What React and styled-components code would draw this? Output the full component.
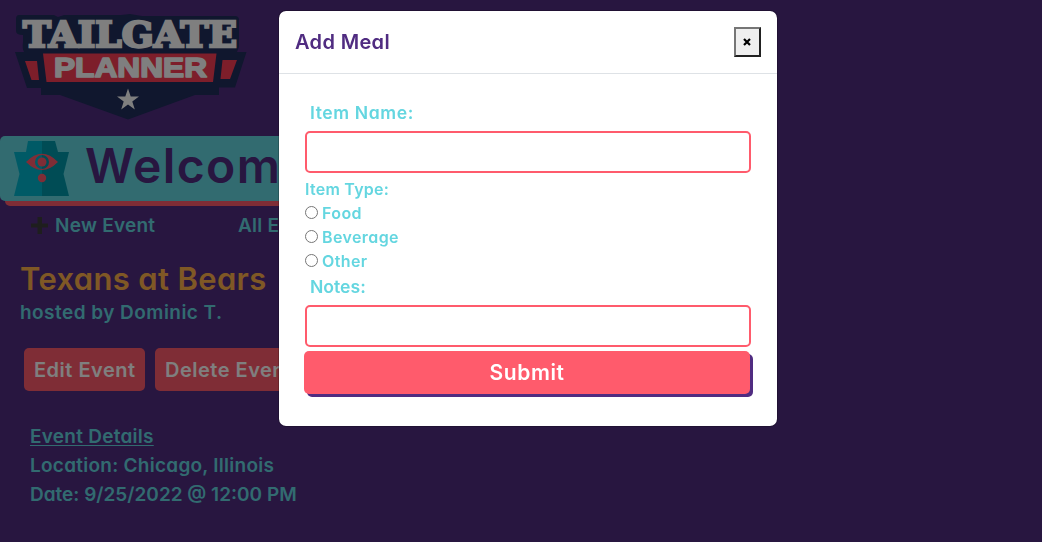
import React from "react";
import styled, { createGlobalStyle } from "styled-components";

const GlobalStyle = createGlobalStyle`
  *, *::before, *::after { box-sizing: border-box; }
  html, body, #root { height: 100%; }
  body {
    margin: 0;
    overflow: hidden;
    background: #502c81;
    color: #64d6e0;
    font-family: Inter, "Open Sans", sans-serif;
    font-feature-settings: "cv11" 1;
    font-weight: 560;
  }
  h1, h2, p { margin: 0; font-weight: 560; }
`;

const Text = styled.span`
  display: inline-block;
  vertical-align: top;
  white-space: nowrap;
  font-size: ${(p) => p.$size || 19}px;
  letter-spacing: ${(p) => p.$track ?? 0.26}px;
`;
const Page = styled.div`
  display: flex;
  flex-direction: column;
  align-items: flex-start;
`;
const Logo = styled.svg`
  display: block;
  width: 260px;
  height: 136px;
`;
const Banner = styled.header`
  display: flex;
  align-items: center;
  width: 500px;
  height: 65px;
  padding-left: 14px;
  gap: 16px;
  border-radius: 5px;
  background: #64d6e0;
  box-shadow: 5px 5px 0 #ff5b6c;
`;
const Mark = styled.svg`
  flex: none;
  width: 55px;
  height: 55px;
`;
const Greeting = styled.h1`
  color: #502c81;
  line-height: 53px;
  height: 60px;
`;
const Nav = styled.nav`
  display: flex;
  align-items: center;
  height: 48px;
  padding-left: 31px;
`;
const NavItem = styled.a`
  display: flex;
  align-items: center;
  gap: 7px;
  width: ${(p) => p.$width}px;
`;
const EventHead = styled.section`
  padding: 10px 0 0 20px;
`;
const EventTitle = styled.h2`
  color: #ffb04a;
  line-height: 40px;
`;
const Host = styled.p`
  line-height: 28px;
`;
const Actions = styled.div`
  display: flex;
  gap: 10px;
  padding: 21px 0 0 24px;
`;
const Action = styled.button`
  height: 43px;
  width: ${(p) => p.$width}px;
  padding: 0 0 0 10px;
  border: 0;
  border-radius: 5px;
  background: #ff5b6c;
  color: #fff;
  font: inherit;
  text-align: left;
`;
const Details = styled.section`
  padding: 31px 0 0 30px;
  line-height: 29px;
`;
const Underlined = styled.p`
  span {
    text-decoration: underline;
    text-decoration-thickness: 1px;
    text-underline-offset: 2px;
  }
`;
const Backdrop = styled.div`
  position: fixed;
  inset: 0;
  background: rgba(0, 0, 0, 0.5);
`;
const Dialog = styled.div`
  position: absolute;
  left: 278px;
  top: 10px;
  width: 500px;
  height: 417px;
  border: 1px solid rgba(0, 0, 0, 0.2);
  border-radius: 8px;
  background: #fff;
  background-clip: padding-box;
`;
const DialogHead = styled.div`
  display: flex;
  align-items: center;
  justify-content: space-between;
  height: 63px;
  padding: 0 16px;
  border-bottom: 1px solid #dee2e6;
  color: #502c81;
`;
const Close = styled.button`
  display: grid;
  place-items: center;
  width: 27px;
  height: 30px;
  padding: 0 1px 1px 0;
  border: 2px solid;
  border-color: #767676 #212121 #212121 #767676;
  background: #efefef;
`;
const Form = styled.form`
  display: flex;
  flex-direction: column;
  padding: 25px 26px 0;
`;
const Label = styled.label`
  line-height: ${(p) => p.$line || 24}px;
  height: ${(p) => p.$line || 24}px;
  padding-left: ${(p) => p.$indent || 0}px;
`;
const Input = styled.input`
  height: 42px;
  margin: ${(p) => p.$margin || 0};
  border: 2px solid #ff5b6c;
  border-radius: 5px;
  background: #fff;
`;
const Option = styled.label`
  display: flex;
  align-items: center;
  gap: 4px;
  height: 24px;
  line-height: 24px;
`;
const Radio = styled.input`
  width: 13px;
  height: 13px;
  margin: 0 0 2px;
`;
const Submit = styled.button`
  height: 43px;
  margin: 4px 1px 0 -1px;
  padding: 0;
  border: 0;
  border-radius: 5px;
  background: #ff5b6c;
  box-shadow: 3px 3px 0 #502c81;
  color: #fff;
  font: inherit;
`;

function TailgateLogo() {
  return (
    <Logo viewBox="0 0 260 136">
      <path fill="#202e5c" d="M19 15H54L58 17 64 15H121L130 14 142 16H235Q239 16 239 20V47L237 52H246.500L235 87.500H219V95H195L128 119.500 60 95H41V88H27L15 52H24Q22 48 23 42V35Q16 35 16 31V19Q16 15 19 15Z" />
      <path fill="#fa3c54" d="M43 53.500H216.500L213 82H46.500ZM25 61H37L39 80H31.500ZM222.500 60H237L230 79H220.500Z" />
      <text x="23" y="47" fill="#fff" stroke="#fff" strokeWidth="2.400" fontFamily="DejaVu Serif" fontWeight="700" fontSize="35" textLength="214" lengthAdjust="spacingAndGlyphs">TAILGATE</text>
      <text x="54" y="77.200" fill="#fff" stroke="#fff" strokeWidth="1.600" strokeLinejoin="round" fontFamily="Liberation Sans" fontWeight="700" fontSize="27.500" textLength="153" lengthAdjust="spacingAndGlyphs">PLANNER</text>
      <path fill="#fff" d="M128 88.500 130.700 96.500H139L132.300 101.500 134.800 109.500 128 104.600 121.200 109.500 123.700 101.500 117 96.500H125.300Z" />
    </Logo>
  );
}

function BannerMark() {
  return (
    <Mark viewBox="14 141 55 55">
      <path fill="#00b4cc" d="M28 141H42V196H14L19.500 174 14 152H26Z" />
      <path fill="#0098aa" d="M42 141H55L58 152H69L63.500 174 69 196H42Z" />
      <path fill="#ff5b6c" fillRule="evenodd" d="M26 162Q42 145.500 58 162Q42 178 26 162ZM35 162A7 7 0 1 0 49 162A7 7 0 1 0 35 162Z" />
      <circle cx="42" cy="162" r="4.500" fill="#ff5b6c" />
      <circle cx="42" cy="178" r="4.200" fill="#ff5b6c" />
    </Mark>
  );
}

export default function App() {
  return (
    <>
      <GlobalStyle />
      <Page>
        <TailgateLogo />
        <Banner>
          <BannerMark />
          <Greeting><Text $size={48} $track={1.4}>Welcom</Text></Greeting>
        </Banner>
        <Nav>
          <NavItem $width={207}>
            <svg width="17" height="17" viewBox="0 0 17 17"><path fill="#3c3c3c" d="M6.500 0H11V6.500H17V10.500H11V17H6.500V10.500H0V6.500H6.500Z" /></svg>
            <Text>New Event</Text>
          </NavItem>
          <NavItem $width={60}><Text>All Ev</Text></NavItem>
        </Nav>
        <EventHead>
          <EventTitle><Text $size={31} $track={0.35}>Texans at Bears</Text></EventTitle>
          <Host><Text $track={0.46}>hosted by Dominic T.</Text></Host>
        </EventHead>
        <Actions>
          <Action $width={121}><Text $size={20} $track={0.5}>Edit Event</Text></Action>
          <Action $width={145}><Text $size={20} $track={0.5}>Delete Event</Text></Action>
        </Actions>
        <Details>
          <Underlined><Text>Event Details</Text></Underlined>
          <p><Text>Location: Chicago, Illinois</Text></p>
          <p><Text $track={0}>Date: 9/25/2022 @ 12:00 PM</Text></p>
        </Details>
      </Page>
      <Backdrop>
        <Dialog role="dialog">
          <DialogHead>
            <Text $size={20} $track={0.35}>Add Meal</Text>
            <Close type="button" aria-label="Close">
              <svg width="8" height="8" viewBox="0 0 8 8"><path d="M1 1 7 7M7 1 1 7" stroke="#000" strokeWidth="2.200" /></svg>
            </Close>
          </DialogHead>
          <Form>
            <Label $line={28} $indent={5}><Text $size={17.6} $track={0.58}>Item Name:</Text></Label>
            <Input $margin="4px 0 4px" />
            <Label><Text $size={16}>Item Type:</Text></Label>
            <Option><Radio type="radio" name="type" /><Text $size={16} $track={0.4}>Food</Text></Option>
            <Option><Radio type="radio" name="type" /><Text $size={16} $track={0.4}>Beverage</Text></Option>
            <Option><Radio type="radio" name="type" /><Text $size={16} $track={0.4}>Other</Text></Option>
            <Label $line={28} $indent={5}><Text $size={17.6} $track={0}>Notes:</Text></Label>
            <Input $margin="4px 0 0" />
            <Submit type="button"><Text $size={21} $track={0.6}>Submit</Text></Submit>
          </Form>
        </Dialog>
      </Backdrop>
    </>
  );
}
